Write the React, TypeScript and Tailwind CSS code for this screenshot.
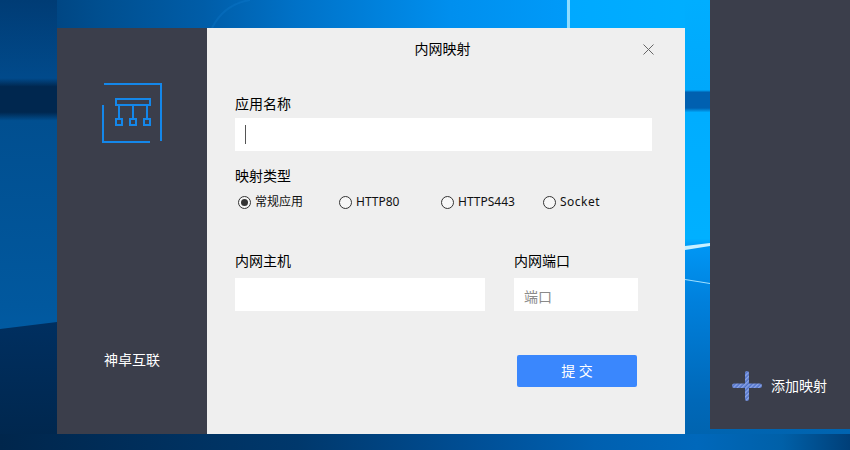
const Radio = ({ label, checked, spaced }: { label: string; checked?: boolean; spaced?: boolean }) => (
  <label className="flex items-center gap-[4px] text-[12px] leading-5 text-[#111]">
    <span className="flex h-[13px] w-[13px] items-center justify-center rounded-full border border-[#333] bg-[#f7f7f7]">
      {checked && <span className="h-[7px] w-[7px] rounded-full bg-[#333]" />}
    </span>
    <span className={spaced ? "tracking-[0.5px]" : ""}>{label}</span>
  </label>
);

const Wallpaper = () => (
  <svg className="absolute inset-0" width="850" height="450" viewBox="0 0 850 450">
    <defs>
      <linearGradient id="top" x1="0" y1="0" x2="1" y2="0">
        <stop offset="0" stopColor="#003c75" />
        <stop offset="0.12" stopColor="#004f90" />
        <stop offset="0.24" stopColor="#005da8" />
        <stop offset="0.35" stopColor="#0072c8" />
        <stop offset="0.53" stopColor="#008fee" />
        <stop offset="0.665" stopColor="#009af8" />
        <stop offset="0.67" stopColor="#00a9ff" />
        <stop offset="0.85" stopColor="#00b0ff" />
      </linearGradient>
      <linearGradient id="right" gradientUnits="userSpaceOnUse" x1="0" y1="0" x2="0" y2="450">
        <stop offset="0" stopColor="#00aeff" />
        <stop offset="0.2" stopColor="#00a8fb" />
        <stop offset="0.205" stopColor="#0060b0" />
        <stop offset="0.24" stopColor="#0060b0" />
        <stop offset="0.25" stopColor="#00adff" />
        <stop offset="0.53" stopColor="#00b0ff" />
        <stop offset="0.55" stopColor="#0096f4" />
        <stop offset="0.67" stopColor="#0080dc" />
        <stop offset="0.89" stopColor="#0068b8" />
        <stop offset="1" stopColor="#0062ac" />
      </linearGradient>
      <linearGradient id="bottom" x1="0" y1="0" x2="1" y2="0">
        <stop offset="0" stopColor="#00264c" />
        <stop offset="0.35" stopColor="#00386c" />
        <stop offset="0.56" stopColor="#004f96" />
        <stop offset="0.7" stopColor="#0060b0" />
        <stop offset="0.82" stopColor="#0068bb" />
        <stop offset="0.92" stopColor="#0060a8" />
        <stop offset="1" stopColor="#003f78" />
      </linearGradient>
      <linearGradient id="left" gradientUnits="userSpaceOnUse" x1="0" y1="0" x2="0" y2="340">
        <stop offset="0" stopColor="#003c75" />
        <stop offset="0.23" stopColor="#014a8b" />
        <stop offset="0.255" stopColor="#00274f" />
        <stop offset="0.33" stopColor="#00274f" />
        <stop offset="0.355" stopColor="#014f90" />
        <stop offset="0.9" stopColor="#01589e" />
        <stop offset="1" stopColor="#015ba3" />
      </linearGradient>
      <linearGradient id="lowerLeft" x1="0" y1="0" x2="0" y2="1">
        <stop offset="0" stopColor="#002f60" />
        <stop offset="1" stopColor="#00264c" />
      </linearGradient>
    </defs>
    <rect width="850" height="450" fill="url(#top)" />
    <rect x="0" y="0" width="57" height="340" fill="url(#left)" />
    <polygon points="0,329 57,322 57,450 0,450" fill="url(#lowerLeft)" />
    <rect x="685" y="0" width="165" height="450" fill="url(#right)" />
    <rect x="567" y="0" width="3" height="28" fill="#8fdcff" />
    <path d="M212 28C220 12 232 3 250 0" stroke="#1a8ae0" strokeWidth="2" fill="none" opacity="0.2" />
    <polygon points="685,246 710,243 710,246 685,250" fill="#c8f0ff" />
    <polygon points="685,279 710,283 710,284 685,280" fill="#9fe0ff" />
    <rect x="0" y="434" width="850" height="16" fill="url(#bottom)" />
  </svg>
);

const Logo = () => (
  <svg width="60" height="60" viewBox="0 0 60 60" fill="none" stroke="#1487ea" strokeWidth="2" className="mx-auto block">
    <path d="M2 1H59V58" />
    <path d="M1 22V59H48" />
    <rect x="14" y="16" width="34" height="6" />
    <path d="M17 22V36M31 22V36M45 22V36" />
    <rect x="14" y="36" width="6" height="6" />
    <rect x="28" y="36" width="6" height="6" />
    <rect x="42" y="36" width="6" height="6" />
  </svg>
);

const Plus = () => (
  <svg width="30" height="30" viewBox="0 0 30 30">
    <defs>
      <pattern id="hatch" width="3" height="3" patternUnits="userSpaceOnUse" patternTransform="rotate(45)">
        <rect width="3" height="3" fill="#4f70c8" />
        <rect width="1.5" height="3" fill="#8ba4e4" />
      </pattern>
    </defs>
    <rect x="13" y="0" width="4" height="30" rx="2" fill="url(#hatch)" />
    <rect x="0" y="12.5" width="30" height="4.5" rx="2.25" fill="url(#hatch)" />
  </svg>
);

const Label = ({ children }: { children: string }) => (
  <div className="text-[14px] leading-5 text-black">{children}</div>
);

export default function App() {
  return (
    <div className="relative h-[450px] w-[850px] overflow-hidden font-['Noto_Sans','Noto_Sans_CJK_SC',sans-serif]">
      <Wallpaper />
      <div className="relative flex items-start">
        <div className="ml-[57px] mt-[28px] flex h-[406px] w-[628px]">
          <aside className="flex w-[150px] flex-col justify-between bg-[#3b3e4b] pb-[64px] pt-[55px]">
            <Logo />
            <div className="text-center text-[14px] leading-5 text-white">神卓互联</div>
          </aside>
          <main className="w-[478px] bg-[#efefef] px-[28px]">
            <header className="relative flex h-[66px] items-start justify-center pr-[7px] pt-[11px]">
              <span className="text-[14px] leading-5 text-black">内网映射</span>
              <svg className="absolute right-[3px] top-[16px]" width="11" height="11" viewBox="0 0 11 11" stroke="#666" fill="none">
                <path d="M0.5 0.5L10.5 10.5M10.5 0.5L0.5 10.5" />
              </svg>
            </header>
            <Label>应用名称</Label>
            <div className="mt-[4px] flex h-[33px] w-[417px] items-center bg-white pl-[10px]">
              <span className="h-[19px] w-px bg-[#555]" />
            </div>
            <div className="mt-[15px]">
              <Label>映射类型</Label>
            </div>
            <div className="mt-[6px] grid grid-cols-[101px_102px_102px_1fr] pl-[3px]">
              <Radio label="常规应用" checked />
              <Radio label="HTTP80" />
              <Radio label="HTTPS443" />
              <Radio label="Socket" spaced />
            </div>
            <div className="mt-[39px] flex">
              <div className="w-[279px]">
                <Label>内网主机</Label>
                <div className="mt-[7px] h-[33px] w-[250px] bg-white" />
              </div>
              <div>
                <Label>内网端口</Label>
                <div className="mt-[7px] h-[33px] w-[124px] bg-white pl-[10px] pt-[9px] text-[14px] leading-5 text-[#8a8a8a]">
                  端口
                </div>
              </div>
            </div>
            <div className="ml-[282px] mt-[44px] flex h-[32px] w-[120px] items-center justify-center rounded-[2px] bg-[#3a87fd] text-[14px] leading-5 text-white">
              提&nbsp;交
            </div>
          </main>
        </div>
        <aside className="ml-[25px] flex h-[429px] w-[140px] flex-col justify-end bg-[#3b3e4b] pb-[28px] pl-[22px]">
          <div className="flex items-center gap-[9px]">
            <Plus />
            <span className="text-[14px] leading-5 text-white">添加映射</span>
          </div>
        </aside>
      </div>
    </div>
  );
}
